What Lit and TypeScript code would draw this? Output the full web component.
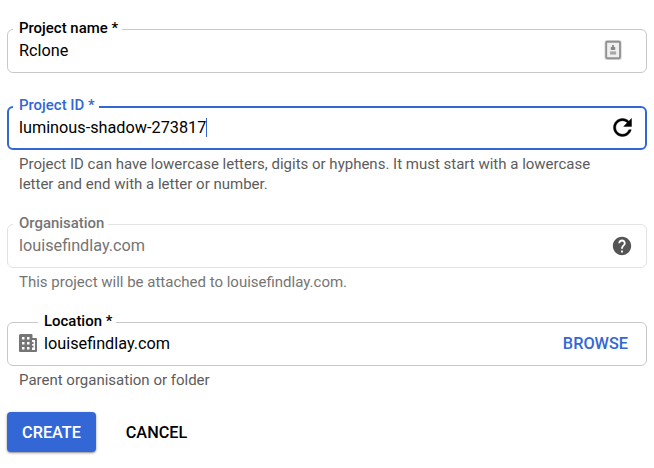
import { LitElement, html, css, svg, nothing } from "lit";
import { customElement, property } from "lit/decorators.js";

const icons = {
  contact: svg`<rect x="4.600" y="3" width="15" height="18" rx="1.200" fill="#f0f0f0" stroke="#dcdcdc" stroke-width="4"/><rect x="4.600" y="3" width="15" height="18" rx="1" fill="#f0f0f0" stroke="#919191" stroke-width="2"/><path fill="#888" d="M11 6.500h2v2.200h1.400v3.200H9.600V8.700H11z"/><path fill="#a8a8a8" d="M8.800 13.500h6.600V17H8.800z"/>`,
  refresh: svg`<path d="M17.65 6.35C16.2 4.9 14.21 4 12 4c-4.42 0-7.99 3.58-7.99 8s3.57 8 7.99 8c3.73 0 6.84-2.55 7.73-6h-2.08c-.82 2.33-3.04 4-5.65 4-3.31 0-6-2.69-6-6s2.69-6 6-6c1.66 0 3.14.69 4.22 1.78L13 11h7V4l-2.35 2.35z" fill="#000" stroke="#000" stroke-width=".4"/>`,
  help: svg`<path fill="#555" d="M12 2C6.48 2 2 6.48 2 12s4.48 10 10 10 10-4.48 10-10S17.52 2 12 2zm1 17h-2v-2h2v2zm2.07-7.75l-.9.92C13.45 12.9 13 13.5 13 15h-2v-.5c0-1.1.45-2.1 1.17-2.83l1.24-1.26c.37-.36.59-.86.59-1.41 0-1.1-.9-2-2-2s-2 .9-2 2H8c0-2.21 1.79-4 4-4s4 1.79 4 4c0 .88-.36 1.68-.93 2.25z"/>`,
  domain: svg`<g transform="translate(3.270 3.270) scale(1.0909)"><path fill="#757575" fill-rule="evenodd" d="M.5-1H11.500a1 1 0 0 1 1 1V3H16a1 1 0 0 1 1 1V16a1 1 0 0 1-1 1H0a1 1 0 0 1-1-1V.5A1.500 1.500 0 0 1 .5-1zM2 2v2.500h2.500V2zM7 2v2.500h2.500V2zM2 7v2.500h2.500V7zM7 7v2.500h2.500V7zM2 12v2.500h2.500V12zM7 12v2.500h2.500V12zM12 5v2h1.500v2H12v1.500h1.500v2H12V15h3V5z"/></g>`,
};
type IconName = keyof typeof icons;

@customElement("ui-icon")
class UiIcon extends LitElement {
  @property() name: IconName = "help";
  @property({ type: Number }) size = 22;
  static styles = css`
    :host { display: block; flex: none; }
    svg { display: block; }
  `;
  render() {
    return html`<svg width=${this.size} height=${this.size} viewBox="0 0 24 24">${icons[this.name]}</svg>`;
  }
}

@customElement("form-field")
class FormField extends LitElement {
  @property() label = "";
  @property() value = "";
  @property() leading?: IconName;
  @property({ type: Boolean, reflect: true }) focused = false;
  @property({ type: Boolean, reflect: true }) disabled = false;
  static styles = css`
    :host { display: block; color: #000; }
    .box {
      box-sizing: border-box; height: 44px; position: relative;
      display: flex; align-items: center;
      border: 1px solid #c8c8c8; border-radius: 6px;
      padding: 0 13px 0 11px;
    }
    .label {
      position: absolute; top: -12px; left: 5px; padding: 0 4px 0 6px;
      background: #fff; white-space: nowrap;
      font-size: 14.95px; line-height: 20px; font-weight: 500;
    }
    .led .label { left: 30px; }
    .value { font-size: 16.25px; line-height: 20px; white-space: nowrap; flex: 1; display: flex; }
    .led .value { margin-left: 5px; }
    .led .icon { margin: -2px 0 0 -2px; }
    .caret { width: 1px; height: 19px; background: #3367d6; }
    .hint { padding: 4px 40px 0 12px; font-size: 15px; line-height: 20px; color: #5c5c5c; }
    :host([focused]) .box { border: 2px solid #3367d6; padding: 0 9px 0 10px; }
    :host([focused]) .label { top: -13px; left: 4px; color: #3367d6; }
    :host([disabled]) { color: #757575; }
    :host([disabled]) .box { border-color: #e3e3e3; }
    :host([disabled]) .hint { color: #757575; }
  `;
  render() {
    return html`
      <div class="box ${this.leading ? "led" : ""}">
        <span class="label">${this.label}</span>
        ${this.leading ? html`<ui-icon class="icon" name=${this.leading}></ui-icon>` : nothing}
        <span class="value">${this.value}${this.focused ? html`<span class="caret"></span>` : nothing}</span>
        <slot></slot>
      </div>
      <div class="hint"><slot name="hint"></slot></div>
    `;
  }
}

@customElement("app-root")
class AppRoot extends LitElement {
  static styles = css`
    :host {
      display: block; box-sizing: border-box; width: 654px; height: 468px;
      padding: 29px 7px 0; background: #fff; overflow: hidden;
      font-family: Roboto, sans-serif;
    }
    .name { height: 77px; }
    .id { height: 118px; }
    .org { height: 98px; }
    .loc { height: 90px; }
    .contact { margin-right: 9px; margin-top: -2px; }
    .refresh { margin-top: -1px; }
    .browse { color: #3367d6; font-size: 16.3px; line-height: 20px; font-weight: 500; margin-right: 5px; }
    .actions { display: flex; }
    button {
      height: 40px; padding: 2px 0 0; border: 0; border-radius: 4px; background: none;
      font: 500 16.25px/20px Roboto, sans-serif; color: #000;
    }
    .create {
      width: 89px; background: #3367d6; color: #fff;
      box-shadow: 0 1px 3px rgba(0, 0, 0, .35), 0 1px 1px rgba(0, 0, 0, .15);
    }
    .cancel { width: 91px; margin-left: 15px; }
  `;
  render() {
    return html`
      <form-field class="name" label="Project name *" value="Rclone">
        <ui-icon class="contact" name="contact" size="22"></ui-icon>
      </form-field>
      <form-field class="id" focused label="Project ID *" value="luminous-shadow-273817">
        <ui-icon class="refresh" name="refresh" size="27"></ui-icon>
        <span slot="hint">Project ID can have lowercase letters, digits or hyphens. It must start with a lowercase letter and end with a letter or number.</span>
      </form-field>
      <form-field class="org" disabled label="Organisation" value="louisefindlay.com">
        <ui-icon name="help"></ui-icon>
        <span slot="hint">This project will be attached to louisefindlay.com.</span>
      </form-field>
      <form-field class="loc" label="Location *" value="louisefindlay.com" leading="domain">
        <span class="browse">BROWSE</span>
        <span slot="hint">Parent organisation or folder</span>
      </form-field>
      <div class="actions">
        <button class="create">CREATE</button>
        <button class="cancel">CANCEL</button>
      </div>
    `;
  }
}
